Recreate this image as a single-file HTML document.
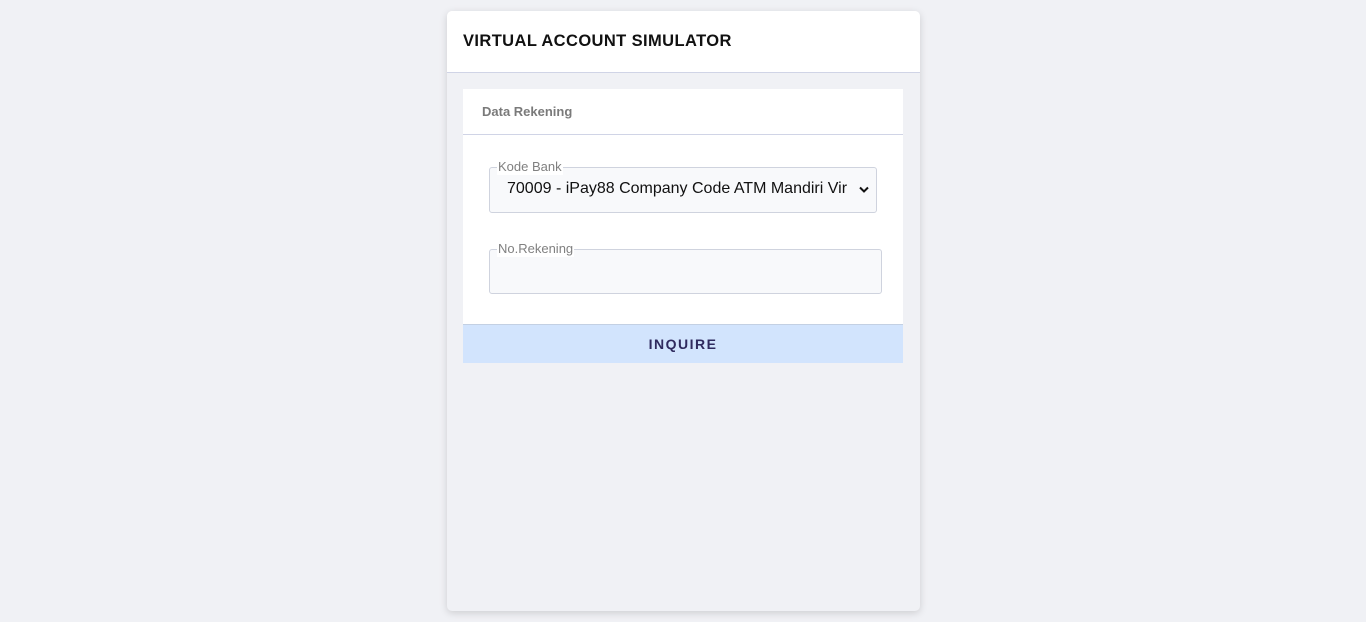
<!DOCTYPE html>
<html><head><meta charset="utf-8"><style>
*{box-sizing:border-box;margin:0;padding:0}
body{width:1366px;height:622px;background:#f0f1f5;font-family:"Liberation Sans",sans-serif;position:relative;overflow:hidden}
.card{position:absolute;left:447px;top:11px;width:473px;height:600px;background:#f0f1f5;border-radius:5px;box-shadow:0 2px 8px rgba(0,0,0,.15);overflow:hidden}
.hdr{height:62px;background:#fff;border-bottom:1px solid #d0d4e6;padding-left:16px;line-height:61px;font-weight:bold;font-size:16.5px;letter-spacing:.4px;color:#111}
.panel{position:absolute;left:16px;top:78px;width:440px;height:274px;background:#fff}
.ph{height:46px;border-bottom:1px solid #d0d4e6;padding-left:19px;line-height:46px;font-weight:bold;font-size:13px;color:#7a7a7a}
.field{position:absolute;border:1px solid #cfd3de;border-radius:3px;background:#f8f9fb}
.lbl{position:absolute;left:7px;top:-9px;font-size:13px;color:#808080;background:#fff;line-height:16px;padding:0 1px}
.sel{left:26px;top:78px;width:388px;height:46px}
.sel span{position:absolute;left:17px;top:12px;font-size:16px;color:#111}
.inp{left:26px;top:160px;width:393px;height:45px}
.btn{position:absolute;left:0;top:235px;width:440px;height:39px;background:#d2e4fd;border-top:1px solid #c3d0e3;text-align:center;line-height:38px;font-weight:bold;font-size:14px;letter-spacing:1.5px;color:#2f2a5e}
</style></head><body>
<div class="card">
<div class="hdr">VIRTUAL ACCOUNT SIMULATOR</div>
<div class="panel">
<div class="ph">Data Rekening</div>
<div class="field sel"><div class="lbl">Kode Bank</div><span>70009 - iPay88 Company Code ATM Mandiri Vir</span>
<svg style="position:absolute;right:7px;top:18px" width="10" height="8" viewBox="0 0 10 8"><path d="M1 1.5L5 5.5L9 1.5" stroke="#111" stroke-width="2" fill="none"/></svg></div>
<div class="field inp"><div class="lbl">No.Rekening</div></div>
<div class="btn">INQUIRE</div>
</div>
</div>
</body></html>
